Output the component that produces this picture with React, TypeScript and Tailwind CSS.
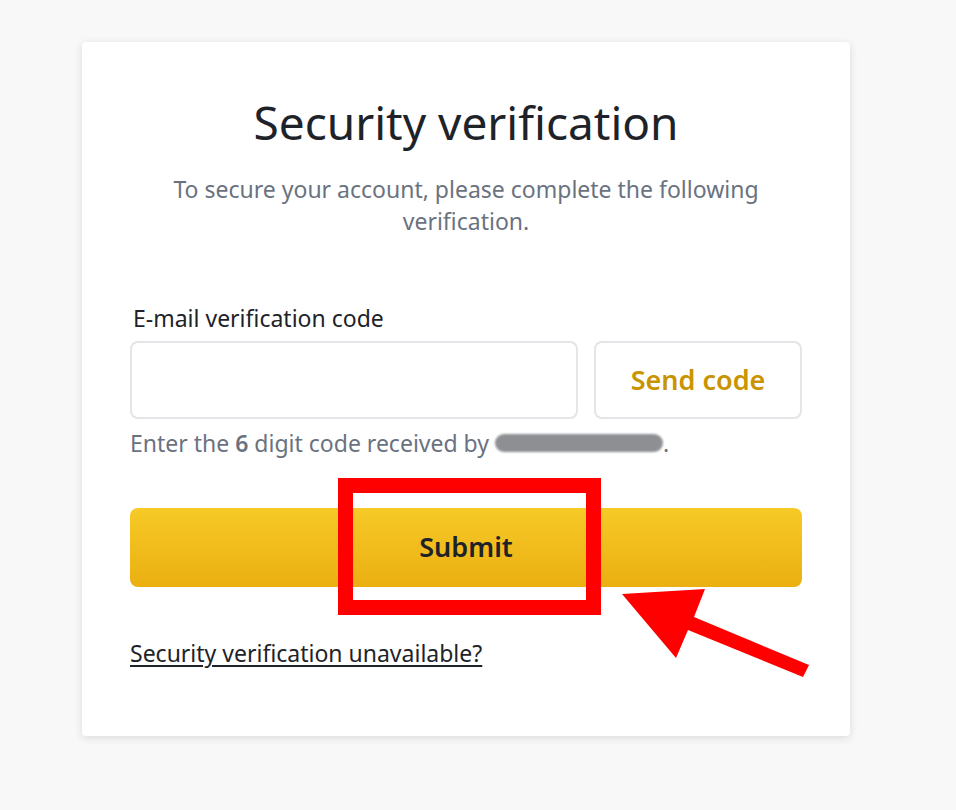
import React from "react";

const font = { fontFamily: '"Noto Sans", "Open Sans", Arial, sans-serif' };

function Annotation() {
  return (
    <>
      <div className="absolute left-[338px] top-[478px] h-[137px] w-[263px] border-[15px] border-[#ff0000]" />
      <svg
        className="absolute left-0 top-0"
        width="956"
        height="810"
        viewBox="0 0 956 810"
      >
        <polygon
          points="622,594 705,589 694,617 809,665 803,677 688,630 676,658"
          fill="#ff0000"
        />
      </svg>
    </>
  );
}

export default function App() {
  return (
    <div
      className="relative min-h-[810px] w-[956px] bg-[#f8f8f8] pt-[42px] pl-[82px]"
      style={font}
    >
      <div className="flex w-[768px] flex-col rounded-[4px] bg-white px-12 pt-[52px] pb-[67px] shadow-[0_2px_8px_rgba(0,0,0,0.12)]">
        <h1 className="text-center text-[46px] leading-[56px] font-normal text-[#1e2329]">
          Security verification
        </h1>
        <p className="mx-auto mt-[23px] w-[620px] text-center text-[23px] leading-[32px] text-[#6a7280]">
          To secure your account, please complete the following verification.
        </p>

        <label className="mt-[65px] pl-[3px] text-[23px] leading-[32px] text-[#1e2329]">
          E-mail verification code
        </label>
        <div className="mt-[7px] flex gap-4">
          <input className="h-[78px] flex-1 rounded-[8px] border-2 border-[#e3e5e8] bg-white px-4 text-[22px] outline-none" />
          <button className="h-[78px] w-[208px] rounded-[8px] border-2 border-[#e3e5e8] bg-white text-[27px] font-semibold text-[#c99400]">
            Send code
          </button>
        </div>
        <p className="mt-[8px] flex items-center text-[23px] leading-[32px] text-[#6a7280]">
          <span>
            Enter the <span className="font-semibold">6</span> digit code received by
          </span>
          <span className="ml-[6px] inline-block h-[18px] w-[168px] rounded-full bg-[#8d8f93] blur-[1px]" />
          <span>.</span>
        </p>

        <button className="mt-[49px] h-[79px] w-full rounded-[8px] bg-gradient-to-b from-[#f6ca27] to-[#ebaf10] text-[27px] font-semibold text-[#1e2329]">
          Submit
        </button>

        <a
          href="#"
          className="mt-[50px] self-start text-[23px] leading-[32px] text-[#1e2329] underline underline-offset-[3px]"
        >
          Security verification unavailable?
        </a>
      </div>
      <Annotation />
    </div>
  );
}
